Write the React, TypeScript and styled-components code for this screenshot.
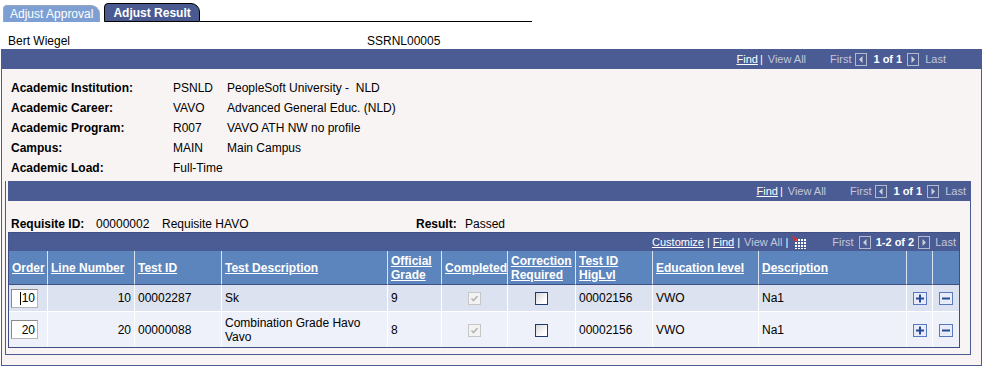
import React from 'react';
import styled, { createGlobalStyle } from 'styled-components';

const NAVY = '#4b5b93';
const HEAD = '#5d85bd';
const LINE = '#3f4e84';
const BOXBG = '#f8f4f4';

const Global = createGlobalStyle`
  html, body { margin: 0; padding: 0; background: #fff; }
  body { font-family: "Liberation Sans", Arial, sans-serif; font-size: 12px; color: #000; }
  * { box-sizing: border-box; }
`;

const Page = styled.div`
  width: 985px;
  height: 370px;
  overflow: hidden;
`;

const TabBar = styled.div`
  display: flex;
  align-items: flex-end;
  height: 22px;
  padding-left: 3px;
`;

const Tab = styled.div<{ $active?: boolean }>`
  height: ${p => (p.$active ? 19 : 17)}px;
  margin-right: ${p => (p.$active ? 0 : 4)}px;
  padding: 0 ${p => (p.$active ? 8 : 6)}px;
  display: flex;
  align-items: center;
  background: ${p => (p.$active ? '#4a5a91' : '#7d9fd4')};
  border: 1px solid ${p => (p.$active ? '#000' : '#9aa6bd')};
  border-bottom: ${p => (p.$active ? '1px solid #000' : 'none')};
  border-radius: 4px 9px 0 0;
  color: #fff;
  font-size: 12px;
  font-weight: ${p => (p.$active ? 'bold' : 'normal')};
  white-space: nowrap;
`;

const TabLine = styled.div`
  width: 332px;
  height: 1px;
  background: #000;
`;

const NameRow = styled.div`
  height: 27px;
  display: flex;
  align-items: flex-end;
  padding: 0 0 1px 8px;
  line-height: 14px;
`;

const NameCell = styled.span<{ $w: number }>`
  width: ${p => p.$w}px;
`;

const Outer = styled.div`
  margin-left: 1px;
  width: 981px;
  border: 1px solid ${NAVY};
  border-top: none;
  background: ${BOXBG};
  padding-bottom: 10px;
`;

const NavBar = styled.div<{ $pr: number; $h: number; $bleed?: boolean }>`
  height: ${p => p.$h}px;
  margin: 0 ${p => (p.$bleed ? -1 : 0)}px;
  background: ${NAVY};
  display: flex;
  align-items: center;
  justify-content: flex-end;
  padding-right: ${p => p.$pr}px;
  font-size: 11px;
  line-height: 13px;
  white-space: nowrap;
`;

type Variant = 'link' | 'dim' | 'pipe' | 'count';

const NavText = styled.span<{ $ml?: number; $v: Variant }>`
  margin-left: ${p => p.$ml ?? 0}px;
  color: ${p => (p.$v === 'dim' ? '#c2c8db' : '#fff')};
  text-decoration: ${p => (p.$v === 'link' ? 'underline' : 'none')};
  font-weight: ${p => (p.$v === 'count' ? 'bold' : 'normal')};
`;

const NavIcon = styled.span<{ $ml?: number }>`
  margin-left: ${p => p.$ml ?? 0}px;
  display: inline-flex;
`;

const InfoList = styled.div`
  padding: 9px 0 0 9px;
`;

const InfoRow = styled.div`
  display: grid;
  grid-template-columns: 162px 54px 1fr;
  height: 20px;
  align-items: center;
  line-height: 14px;
  white-space: pre;
`;

const Label = styled.span`
  font-weight: bold;
`;

const Inner = styled.div`
  margin: 3px 0 0 3px;
  width: 966px;
  border: 1px solid ${NAVY};
  border-top: none;
  background: ${BOXBG};
  padding: 0 0 6px 2px;
`;

const ReqRow = styled.div`
  display: grid;
  grid-template-columns: 85px 66px 254px 49px 1fr;
  height: 17px;
  margin-top: 14px;
  padding-left: 3px;
  align-items: center;
  line-height: 14px;
`;

const GridWrap = styled.div`
  width: 952px;
  border: 1px solid ${LINE};
  background: ${NAVY};
`;

const Table = styled.table`
  width: 950px;
  table-layout: fixed;
  border-collapse: separate;
  border-spacing: 0;
`;

const Col = styled.col<{ $w: number }>`
  width: ${p => p.$w}px;
`;

const HeadCell = styled.th<{ $first?: boolean }>`
  background: ${HEAD};
  height: 34px;
  padding: 0 1px 0 3px;
  border-left: ${p => (p.$first ? 'none' : '1px solid #dbe3f1')};
  border-bottom: 1px solid ${LINE};
  text-align: left;
  vertical-align: middle;
  font-size: 12px;
  line-height: 14px;
  font-weight: bold;
  color: #fff;
  text-decoration: underline;
  white-space: nowrap;
  overflow: hidden;
`;

const Row = styled.tr<{ $h: number }>`
  height: ${p => p.$h}px;
`;

const Cell = styled.td<{ $alt?: boolean; $first?: boolean; $align?: 'left' | 'right' | 'center'; $sep?: boolean }>`
  background: ${p => (p.$alt ? '#eef1fa' : '#dce2ef')};
  padding: 0 3px;
  border-left: ${p => (p.$first ? 'none' : '1px solid #fff')};
  border-bottom: ${p => (p.$sep ? '1px solid #fff' : 'none')};
  text-align: ${p => p.$align ?? 'left'};
  vertical-align: middle;
  font-size: 12px;
  line-height: 14px;
`;

const OrderBox = styled.div`
  width: 27px;
  height: 19px;
  margin-left: -1px;
  background: #fff;
  border: 1px solid #b5b5b5;
  border-top-color: #8a8a8a;
  border-left-color: #8a8a8a;
  display: flex;
  align-items: center;
  justify-content: flex-end;
  padding-right: 2px;
  font-size: 12px;
`;

const Caret = styled.span`
  display: inline-block;
  width: 1px;
  height: 13px;
  background: #000;
  margin-right: 1px;
`;

const CheckDisabled = styled.span`
  display: inline-flex;
  width: 13px;
  height: 13px;
  border: 1px solid #c6c6c6;
  background: #f3f3f3;
  vertical-align: middle;
`;

const CheckBox = styled.span`
  display: inline-block;
  width: 13px;
  height: 13px;
  border: 1px solid #1f3a70;
  background: linear-gradient(135deg, #d6d6d6 0%, #fff 75%);
  vertical-align: middle;
`;

const RowBtn = styled.span`
  display: inline-flex;
  width: 14px;
  height: 13px;
  border: 1px solid #5a78bd;
  background: #e8ecf8;
  vertical-align: middle;
`;

const Arrow = ({ dir }: { dir: 'left' | 'right' }) => (
  <svg width="12" height="13" viewBox="0 0 12 13">
    <rect x="0.5" y="0.5" width="11" height="12" fill="none" stroke="#b2b9cf" />
    <polygon points={dir === 'left' ? '7.5,3 4,6.5 7.5,10' : '4.5,3 8,6.5 4.5,10'} fill="#c9cfdd" />
  </svg>
);

const GridIcon = () => (
  <svg width="14" height="13" viewBox="0 0 14 13">
    <rect x="3" y="3" width="11" height="10" fill="#fff" />
    <g stroke="#4b5b93" strokeWidth="1">
      <line x1="5.5" y1="3" x2="5.5" y2="13" />
      <line x1="8.5" y1="3" x2="8.5" y2="13" />
      <line x1="11.5" y1="3" x2="11.5" y2="13" />
      <line x1="3" y1="5.5" x2="14" y2="5.5" />
      <line x1="3" y1="8.5" x2="14" y2="8.5" />
      <line x1="3" y1="11.5" x2="14" y2="11.5" />
    </g>
    <line x1="0.5" y1="0.5" x2="4" y2="4" stroke="#e8261e" strokeWidth="1.5" />
    <polygon points="5,5 1.8,4.6 4.6,1.8" fill="#e8261e" />
  </svg>
);

const Check = () => (
  <svg width="11" height="11" viewBox="0 0 11 11">
    <polyline points="2.5,5.5 4.5,7.5 8.5,3" fill="none" stroke="#b4b4b4" strokeWidth="1.6" />
  </svg>
);

const Plus = () => (
  <svg width="12" height="11" viewBox="0 0 12 11">
    <line x1="6" y1="1.5" x2="6" y2="9.5" stroke="#2a4a9a" strokeWidth="2" />
    <line x1="2" y1="5.5" x2="10" y2="5.5" stroke="#2a4a9a" strokeWidth="2" />
  </svg>
);

const Minus = () => (
  <svg width="12" height="11" viewBox="0 0 12 11">
    <line x1="2" y1="5.5" x2="10" y2="5.5" stroke="#2a4a9a" strokeWidth="2" />
  </svg>
);

const ScrollNav = ({ pr, bleed }: { pr: number; bleed?: boolean }) => (
  <NavBar $h={20} $pr={pr} $bleed={bleed}>
    <NavText $v="link">Find</NavText>
    <NavText $v="pipe" $ml={2}>|</NavText>
    <NavText $v="dim" $ml={5}>View All</NavText>
    <NavText $v="dim" $ml={24}>First</NavText>
    <NavIcon $ml={4}><Arrow dir="left" /></NavIcon>
    <NavText $v="count" $ml={6}>1 of 1</NavText>
    <NavIcon $ml={5}><Arrow dir="right" /></NavIcon>
    <NavText $v="dim" $ml={6}>Last</NavText>
  </NavBar>
);

const info = [
  ['Academic Institution:', 'PSNLD', 'PeopleSoft University -  NLD'],
  ['Academic Career:', 'VAVO', 'Advanced General Educ. (NLD)'],
  ['Academic Program:', 'R007', 'VAVO ATH NW no profile'],
  ['Campus:', 'MAIN', 'Main Campus'],
  ['Academic Load:', 'Full-Time', ''],
];

const cols = [38, 87, 87, 166, 54, 66, 68, 77, 106, 148, 26, 27];

const rows = [
  { order: '10', line: '10', id: '00002287', desc: 'Sk', grade: '9', h: 27, caret: true },
  { order: '20', line: '20', id: '00000088', desc: 'Combination Grade Havo Vavo', grade: '8', h: 35, caret: false },
];

export default function App() {
  return (
    <Page>
      <Global />
      <TabBar>
        <Tab>Adjust Approval</Tab>
        <Tab $active>Adjust Result</Tab>
        <TabLine />
      </TabBar>
      <NameRow>
        <NameCell $w={359}>Bert Wiegel</NameCell>
        <NameCell $w={200}>SSRNL00005</NameCell>
      </NameRow>
      <Outer>
        <ScrollNav pr={36} bleed />
        <InfoList>
          {info.map(([l, v, d]) => (
            <InfoRow key={l}>
              <Label>{l}</Label>
              <span>{v}</span>
              <span>{d}</span>
            </InfoRow>
          ))}
        </InfoList>
        <Inner>
          <ScrollNav pr={4} />
          <ReqRow>
            <Label>Requisite ID:</Label>
            <span>00000002</span>
            <span>Requisite HAVO</span>
            <Label>Result:</Label>
            <span>Passed</span>
          </ReqRow>
          <GridWrap>
            <NavBar $h={18} $pr={3}>
              <NavText $v="link">Customize</NavText>
              <NavText $v="pipe" $ml={3}>|</NavText>
              <NavText $v="link" $ml={3}>Find</NavText>
              <NavText $v="pipe" $ml={3}>|</NavText>
              <NavText $v="dim" $ml={4}>View All</NavText>
              <NavText $v="pipe" $ml={3}>|</NavText>
              <NavIcon $ml={4}><GridIcon /></NavIcon>
              <NavText $v="dim" $ml={26}>First</NavText>
              <NavIcon $ml={5}><Arrow dir="left" /></NavIcon>
              <NavText $v="count" $ml={5}>1-2 of 2</NavText>
              <NavIcon $ml={4}><Arrow dir="right" /></NavIcon>
              <NavText $v="dim" $ml={5}>Last</NavText>
            </NavBar>
            <Table>
              <colgroup>
                {cols.map((w, i) => (
                  <Col key={i} $w={w} />
                ))}
              </colgroup>
              <thead>
                <tr>
                  <HeadCell $first>Order</HeadCell>
                  <HeadCell>Line Number</HeadCell>
                  <HeadCell>Test ID</HeadCell>
                  <HeadCell>Test Description</HeadCell>
                  <HeadCell>Official<br />Grade</HeadCell>
                  <HeadCell>Completed</HeadCell>
                  <HeadCell>Correction<br />Required</HeadCell>
                  <HeadCell>Test ID<br />HigLvl</HeadCell>
                  <HeadCell>Education level</HeadCell>
                  <HeadCell>Description</HeadCell>
                  <HeadCell />
                  <HeadCell />
                </tr>
              </thead>
              <tbody>
                {rows.map((r, i) => {
                  const alt = i === 1;
                  const sep = i === 0;
                  return (
                    <Row key={r.order} $h={r.h}>
                      <Cell $first $alt={alt} $sep={sep}>
                        <OrderBox>
                          {r.caret && <Caret />}
                          {r.order}
                        </OrderBox>
                      </Cell>
                      <Cell $alt={alt} $sep={sep} $align="right">{r.line}</Cell>
                      <Cell $alt={alt} $sep={sep}>{r.id}</Cell>
                      <Cell $alt={alt} $sep={sep}>{r.desc}</Cell>
                      <Cell $alt={alt} $sep={sep}>{r.grade}</Cell>
                      <Cell $alt={alt} $sep={sep} $align="center">
                        <CheckDisabled><Check /></CheckDisabled>
                      </Cell>
                      <Cell $alt={alt} $sep={sep} $align="center">
                        <CheckBox />
                      </Cell>
                      <Cell $alt={alt} $sep={sep}>00002156</Cell>
                      <Cell $alt={alt} $sep={sep}>VWO</Cell>
                      <Cell $alt={alt} $sep={sep}>Na1</Cell>
                      <Cell $alt={alt} $sep={sep} $align="center">
                        <RowBtn><Plus /></RowBtn>
                      </Cell>
                      <Cell $alt={alt} $sep={sep} $align="center">
                        <RowBtn><Minus /></RowBtn>
                      </Cell>
                    </Row>
                  );
                })}
              </tbody>
            </Table>
          </GridWrap>
        </Inner>
      </Outer>
    </Page>
  );
}
